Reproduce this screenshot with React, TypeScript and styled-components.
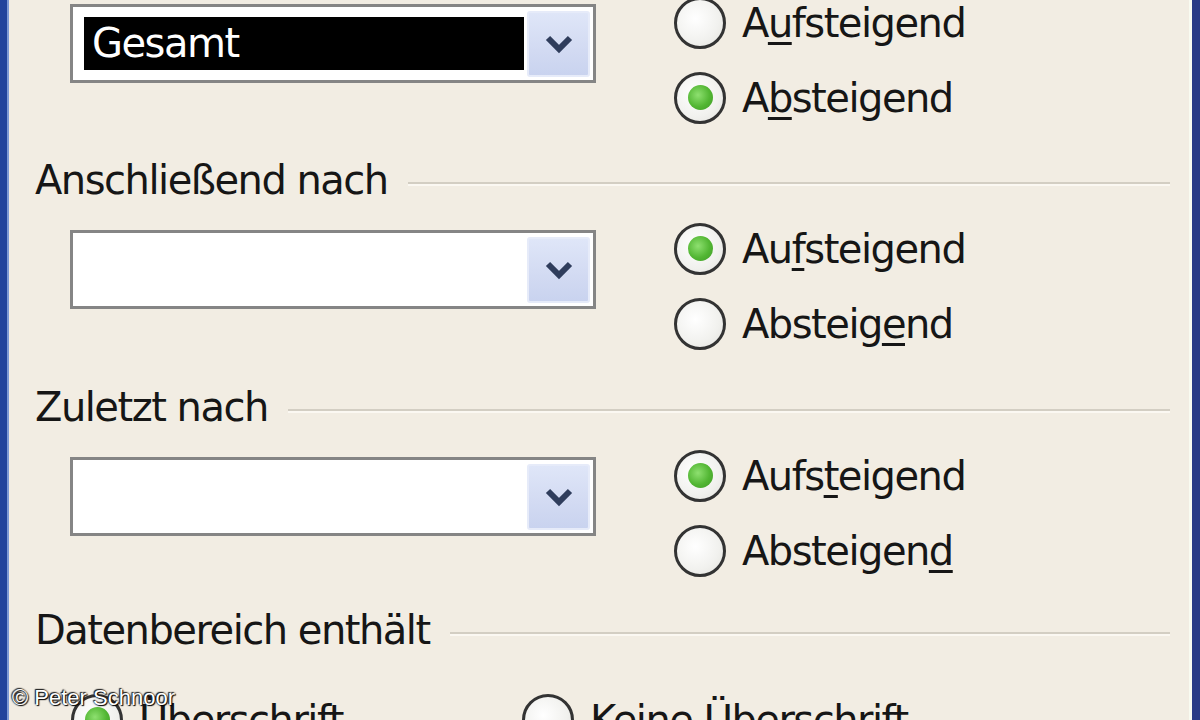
import React from "react";
import styled, { createGlobalStyle } from "styled-components";

const GlobalStyle = createGlobalStyle`
  html, body {
    margin: 0;
    padding: 0;
    background: #f2ede3;
    overflow: hidden;
  }
`;

const Frame = styled.div`
  position: relative;
  width: 1200px;
  height: 720px;
  display: flex;
  overflow: hidden;
  background: #f2ede3;
  font-family: "DejaVu Sans", Tahoma, sans-serif;
  color: #161616;
`;

const LeftEdge = styled.div`
  width: 7px;
  flex: none;
  background: #22449c;
  border-right: 2px solid #7e9bd6;
`;

const RightEdge = styled.div`
  width: 8px;
  flex: none;
  background: #283b86;
  border-left: 3px solid #f8fbf1;
  margin-left: auto;
`;

const Content = styled.div`
  flex: 1;
  display: flex;
  flex-direction: column;
  padding: 0 19px 0 26px;
  margin-top: -24px;
`;

const Group = styled.div<{ $tail?: number }>`
  display: flex;
  flex-direction: column;
  margin-bottom: ${(p) => p.$tail ?? 0}px;
`;

const Header = styled.div`
  height: 44px;
  display: flex;
  align-items: center;
  gap: 20px;
  font-size: 40px;
  letter-spacing: -1.5px;
  white-space: nowrap;
`;

const HeaderLine = styled.div`
  flex: 1;
  height: 2px;
  margin-top: 8px;
  background: #d3cec3;
  border-bottom: 2px solid #fbf8f2;
`;

const Row = styled.div`
  display: flex;
  gap: 78px;
  padding-left: 35px;
  margin-top: 9px;
  margin-bottom: 20px;
  height: 150px;
`;

const Combo = styled.div`
  width: 526px;
  height: 79px;
  margin-top: 19px;
  box-sizing: border-box;
  border: 3px solid #858585;
  background: #ffffff;
  display: flex;
  align-items: center;
  padding: 0 3px 0 11px;
  gap: 3px;
`;

const Field = styled.div<{ $selected?: boolean }>`
  flex: 1;
  height: 53px;
  background: ${(p) => (p.$selected ? "#000000" : "#ffffff")};
  color: ${(p) => (p.$selected ? "#ffffff" : "#161616")};
  font-size: 40px;
  letter-spacing: -1.5px;
  line-height: 53px;
  padding-left: 8px;
`;

const DropButton = styled.div`
  width: 63px;
  height: 66px;
  box-sizing: border-box;
  border: 2px solid #e6ebf9;
  border-radius: 3px;
  background: linear-gradient(180deg, #dfe6f8 0%, #d2daf2 60%, #c9d3ef 100%);
  display: flex;
  align-items: center;
  justify-content: center;
`;

const RadioCol = styled.div`
  display: flex;
  flex-direction: column;
`;

const RadioItem = styled.div`
  height: 75px;
  display: flex;
  align-items: center;
  gap: 16px;
  font-size: 40px;
  letter-spacing: -1.5px;
  white-space: nowrap;
`;

const RadioCircle = styled.div<{ $checked?: boolean }>`
  width: 52px;
  height: 52px;
  box-sizing: border-box;
  border-radius: 50%;
  border: 3px solid #333333;
  background: radial-gradient(circle at 40% 40%, #ffffff 0%, #f1f1ee 60%, #e2e1dc 100%);
  display: flex;
  align-items: center;
  justify-content: center;
  flex: none;

  &::after {
    content: "";
    display: ${(p) => (p.$checked ? "block" : "none")};
    width: 25px;
    height: 25px;
    border-radius: 50%;
    background: radial-gradient(circle at 40% 40%, #8ee070 0%, #52b633 55%, #3e9a27 100%);
  }
`;

const Key = styled.span`
  text-decoration: underline;
  text-decoration-thickness: 3px;
  text-underline-offset: 5px;
`;

const BottomRow = styled.div`
  display: grid;
  grid-template-columns: 451px auto;
  padding-left: 36px;
  margin-top: 30px;
`;

const Watermark = styled.div`
  position: absolute;
  left: 12px;
  top: 685px;
  font-family: "Liberation Sans", Arial, sans-serif;
  font-size: 22px;
  color: #ffffff;
  text-shadow: 0 0 2px #000, 1px 1px 1px #000, -1px -1px 1px #222;
`;

const Chevron = () => (
  <svg width="32" height="22" viewBox="0 0 32 22">
    <polyline points="5,5 16,16 27,5" fill="none" stroke="#2f3d5c" strokeWidth="6" strokeLinejoin="miter" />
  </svg>
);

type Label = { pre: string; key: string; post: string };

const Radio: React.FC<{ checked?: boolean; label: Label }> = ({ checked, label }) => (
  <RadioItem>
    <RadioCircle $checked={checked} />
    <span>
      {label.pre}
      <Key>{label.key}</Key>
      {label.post}
    </span>
  </RadioItem>
);

const SortRow: React.FC<{ value?: string; asc: Label; desc: Label; ascending: boolean }> = ({
  value,
  asc,
  desc,
  ascending,
}) => (
  <Row>
    <Combo>
      <Field $selected={!!value}>{value}</Field>
      <DropButton>
        <Chevron />
      </DropButton>
    </Combo>
    <RadioCol>
      <Radio checked={ascending} label={asc} />
      <Radio checked={!ascending} label={desc} />
    </RadioCol>
  </Row>
);

export default function App() {
  return (
    <>
      <GlobalStyle />
      <Frame>
        <LeftEdge />
        <Content>
          <Group $tail={3}>
            <SortRow
              value="Gesamt"
              ascending={false}
              asc={{ pre: "A", key: "u", post: "fsteigend" }}
              desc={{ pre: "A", key: "b", post: "steigend" }}
            />
          </Group>
          <Group $tail={4}>
            <Header>
              Anschließend nach
              <HeaderLine />
            </Header>
            <SortRow
              ascending
              asc={{ pre: "Au", key: "f", post: "steigend" }}
              desc={{ pre: "Absteig", key: "e", post: "nd" }}
            />
          </Group>
          <Group>
            <Header>
              Zuletzt nach
              <HeaderLine />
            </Header>
            <SortRow
              ascending
              asc={{ pre: "Aufs", key: "t", post: "eigend" }}
              desc={{ pre: "Absteigen", key: "d", post: "" }}
            />
          </Group>
          <Group>
            <Header>
              Datenbereich enthält
              <HeaderLine />
            </Header>
            <BottomRow>
              <Radio checked label={{ pre: "", key: "Ü", post: "berschrift" }} />
              <Radio label={{ pre: "Keine Überschrift", key: "", post: "" }} />
            </BottomRow>
          </Group>
        </Content>
        <RightEdge />
        <Watermark>© Peter Schnoor</Watermark>
      </Frame>
    </>
  );
}
